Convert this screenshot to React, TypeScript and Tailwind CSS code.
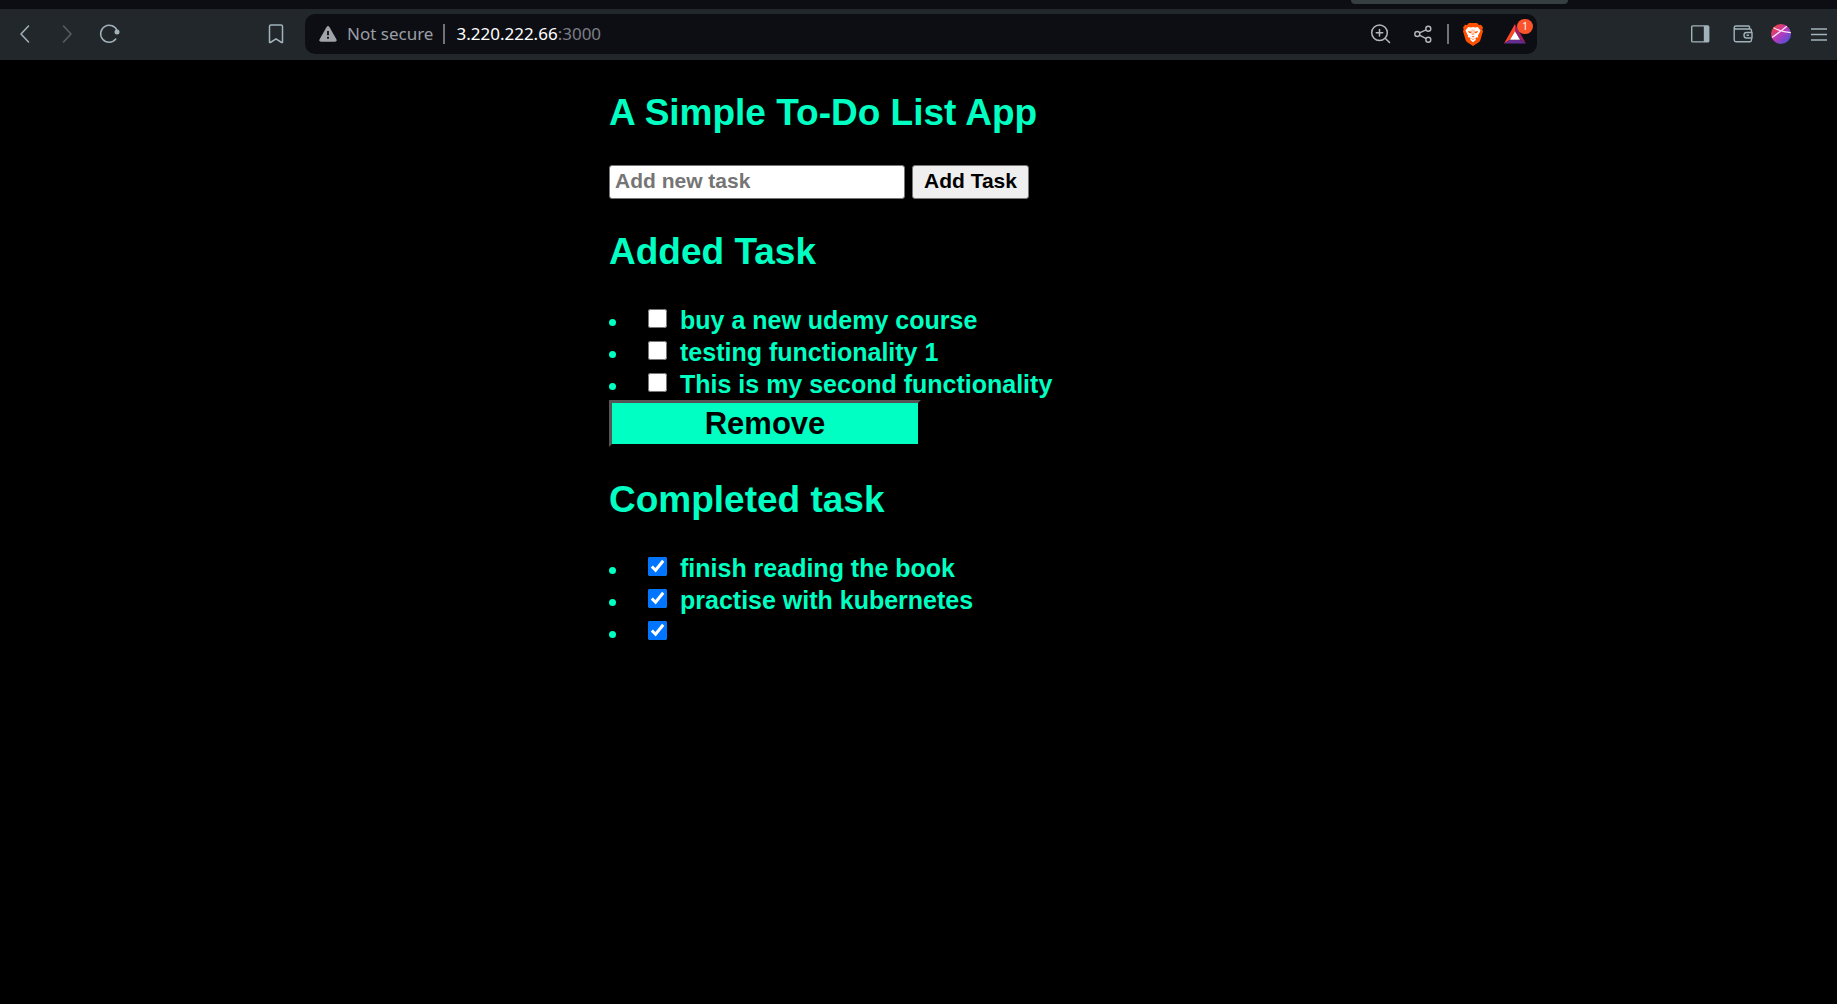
import { useState } from "react";

type Task = { id: string; text: string };

const added: Task[] = [
  { id: "a1", text: "buy a new udemy course" },
  { id: "a2", text: "testing functionality 1" },
  { id: "a3", text: "This is my second functionality" },
];

const completed: Task[] = [
  { id: "c1", text: "finish reading the book" },
  { id: "c2", text: "practise with kubernetes" },
  { id: "c3", text: "" },
];

function TaskList({ tasks, checked }: { tasks: Task[]; checked: boolean }) {
  return (
    <ul className="text-[25px] leading-8">
      {tasks.map((t) => (
        <li key={t.id} className="flex h-8 items-center">
          <span aria-hidden="true" className="mt-[5px] size-[7px] rounded-full bg-[#00ffc2]" />
          <input
            id={t.id}
            type="checkbox"
            aria-label={t.text || "Untitled task"}
            defaultChecked={checked}
            className="mr-[13px] mb-[3px] ml-8 size-[19px]"
          />
          <label htmlFor={t.id}>{t.text}</label>
        </li>
      ))}
    </ul>
  );
}

function Toolbar() {
  return (
    <header className="bg-[#0d0e14] font-['Noto_Sans',sans-serif]">
      <div className="flex h-[9px] justify-end">
        <div className="mr-[269px] h-1 w-[217px] rounded-b-lg bg-[#353f42]" />
      </div>
      <div className="flex h-[51px] items-center bg-[#22272b] pb-px text-[#a1b2ba]">
        <button aria-label="Back" className="ml-[13px] size-6">
          <svg viewBox="0 0 24 24" className="size-6" fill="none" stroke="currentColor" strokeWidth="1.5" strokeLinecap="round" strokeLinejoin="round">
            <path d="M15.5 4 L8 12 L15.5 20" />
          </svg>
        </button>
        <button aria-label="Forward" className="ml-[18px] size-6 text-[#566066]">
          <svg viewBox="0 0 24 24" className="size-6" fill="none" stroke="currentColor" strokeWidth="1.5" strokeLinecap="round" strokeLinejoin="round">
            <path d="M8.5 4 L16 12 L8.5 20" />
          </svg>
        </button>
        <button aria-label="Reload" className="ml-[19px] size-6">
          <svg viewBox="0 0 24 24" className="size-6" fill="none" stroke="currentColor" strokeWidth="1.5" strokeLinecap="round">
            <path d="M19.2 9 A8.5 8.5 0 1 0 17.8 17" />
            <circle cx="19" cy="10" r="2.5" fill="currentColor" stroke="none" />
          </svg>
        </button>
        <button aria-label="Bookmark" className="ml-[142px] size-6">
          <svg viewBox="0 0 24 24" className="size-6" fill="none" stroke="currentColor" strokeWidth="1.5" strokeLinejoin="round">
            <path d="M5.5 4.5 Q5.5 3 7 3 H17 Q18.5 3 18.5 4.5 V20.5 H17.6 L12 16.8 L6.4 20.5 H5.5 Z" />
          </svg>
        </button>
        <div className="ml-[17px] flex h-10 min-w-0 grow items-center rounded-[10px] bg-[#0d0e14] text-[17px] text-[#9a9ea5]">
          <svg viewBox="0 0 18 16" className="ml-3.5 h-4 w-[18px] shrink-0" fill="#a0a3a8">
            <path d="M7.6 1 Q9 -0.8 10.4 1 L17.4 13.2 Q18.2 15.6 16 15.7 H2 Q-0.2 15.6 0.6 13.2 Z" />
            <path d="M9 5 V9.2" stroke="#0d0e14" strokeWidth="1.8" />
            <circle cx="9" cy="11.8" r="1.1" fill="#0d0e14" />
          </svg>
          <span className="ml-2.5 whitespace-nowrap">Not secure</span>
          <span className="ml-2.5 h-5 w-0.5 shrink-0 bg-[#6f7277]" />
          <span className="ml-[11px] whitespace-nowrap text-[#7c7f85]">
            <span className="text-white">3.220.222.66</span>:3000
          </span>
          <div className="ml-auto flex items-center text-[#b4b7bb]">
            <button aria-label="Zoom" className="size-6">
              <svg viewBox="0 0 24 24" className="size-6" fill="none" stroke="currentColor" strokeWidth="1.5" strokeLinecap="round">
                <circle cx="10.5" cy="10.8" r="7.8" />
                <path d="M16.2 16.3 L20.5 20.5 M10.5 7.6 V14 M7.3 10.8 H13.7" />
              </svg>
            </button>
            <button aria-label="Share" className="ml-[18px] size-6">
              <svg viewBox="0 0 24 24" className="size-6" fill="none" stroke="currentColor" strokeWidth="1.4">
                <circle cx="6.3" cy="12" r="2.5" />
                <circle cx="17.3" cy="6.7" r="2.5" />
                <circle cx="17.3" cy="17.8" r="2.5" />
                <path d="M8.5 10.9 L15.1 7.8 M8.5 13.1 L15.1 16.7" />
              </svg>
            </button>
            <span className="ml-3 h-5 w-0.5 bg-[#6f7277]" />
            <button aria-label="Brave Shields" className="ml-3 size-6">
              <svg viewBox="0 0 24 24" className="size-6">
                <path d="M8 1 H16 L18 3 L20 2.8 L22 5.4 L21.3 7.3 L22 9.2 L19.3 18.2 Q18.9 19.4 17.8 20.2 L12 24 L6.2 20.2 Q5.1 19.4 4.7 18.2 L2 9.2 L2.7 7.3 L2 5.4 L4 2.8 L6 3 Z" fill="#ff5000" />
                <path d="M7.2 5 L10 5.5 L12 5 L14 5.5 L16.8 5 L19.5 8.4 L18.6 10.6 L17 13.6 L17.2 15.2 L14.5 15.8 L14.8 18 L12 20.2 L9.2 18 L9.5 15.8 L6.8 15.2 L7 13.6 L5.4 10.6 L4.5 8.4 Z" fill="white" />
                <path d="M7 8.9 L10.4 9.7 L10 11.3 L8 10.7 Z M17 8.9 L13.6 9.7 L14 11.3 L16 10.7 Z M10.3 14.2 H13.7 L12 15.6 Z M9.5 16.2 L12 17 L14.5 16.2 L12 17.8 Z" fill="#ff5000" />
                <path d="M11.1 7.5 L10.9 10.2 L11.4 13 M12.9 7.5 L13.1 10.2 L12.6 13" fill="none" stroke="#ff5000" strokeWidth="0.6" />
              </svg>
            </button>
            <button aria-label="Brave Rewards" className="relative mr-2.5 ml-[18px] size-6">
              <svg viewBox="0 0 24 24" className="size-6">
                <path d="M12 2 L1 21.5 L7 17.7 L12 9.3 Z" fill="#ff4724" />
                <path d="M12 2 L23 21.5 L17 17.7 L12 9.3 Z" fill="#9e1f63" />
                <path d="M1 21.5 H23 L17 17.7 H7 Z" fill="#662d91" />
                <path d="M12 9.3 L17 17.7 H7 Z" fill="white" />
              </svg>
              <span className="absolute -top-[3px] left-[14px] flex h-[15px] w-4 items-center justify-center rounded-full bg-[#fb542b] text-[10px] text-white">1</span>
            </button>
          </div>
        </div>
        <div className="mr-2 ml-[151px] flex items-center">
          <button aria-label="Sidebar" className="size-6">
            <svg viewBox="0 0 24 24" className="size-6" fill="none" stroke="currentColor" strokeWidth="1.4">
              <rect x="3.7" y="3.9" width="17" height="16" rx="1" />
              <path d="M15.8 4 H20.5 V20 H15.8 Z" fill="currentColor" stroke="none" />
            </svg>
          </button>
          <button aria-label="Wallet" className="ml-[19px] size-6">
            <svg viewBox="0 0 24 24" className="size-6" fill="none" stroke="currentColor" strokeWidth="1.4" strokeLinejoin="round">
              <path d="M20.5 10 V8.5 Q20.5 7 19 7 H5 Q3.2 7 3.2 5.5 Q3.2 4 5 4 H17.5 Q18.5 4 18.5 5 V7 M3.2 5.5 V18 Q3.2 19.7 5 19.7 H19 Q20.5 19.7 20.5 18 V16.5" />
              <path d="M21 10.5 H15.5 Q13 10.5 13 13.2 Q13 16 15.5 16 H21 Z M15.5 13.2 H18" />
            </svg>
          </button>
          <button aria-label="Profile" className="ml-4 size-5">
            <svg viewBox="0 0 20 20" className="size-5">
              <defs>
                <linearGradient id="avatar" x1="0" y1="0" x2="1" y2="1">
                  <stop offset="0.1" stopColor="#f0442f" />
                  <stop offset="0.45" stopColor="#c438b4" />
                  <stop offset="0.9" stopColor="#4b50de" />
                </linearGradient>
              </defs>
              <circle cx="10" cy="10" r="10" fill="url(#avatar)" />
              <path d="M2.5 3.8 Q9 7.5 19.8 8.7 M1 13.5 Q7 9.5 15.8 2.2" fill="none" stroke="#ffe4f2" strokeWidth="1.3" />
            </svg>
          </button>
          <button aria-label="Menu" className="ml-[18px] size-5">
            <svg viewBox="0 0 20 20" className="size-5" fill="none" stroke="currentColor" strokeWidth="1.6">
              <path d="M2 5 H18 M2 10.5 H18 M2 16 H18" />
            </svg>
          </button>
        </div>
      </div>
    </header>
  );
}

export default function App() {
  const [draft, setDraft] = useState("");
  return (
    <div className="min-h-screen bg-black">
      <Toolbar />
      <main className="mx-auto max-w-[619px] pt-8 pb-8 font-['Liberation_Sans',Arial,sans-serif] font-bold text-[#00ffc2]">
        <h1 className="mb-[31px] text-[37px] leading-[42px]">A Simple To-Do List App</h1>
        <form className="flex gap-[7px] text-[21px]" onSubmit={(e) => e.preventDefault()}>
          <input
            aria-label="Add new task"
            placeholder="Add new task"
            value={draft}
            onChange={(e) => setDraft(e.target.value)}
            className="h-[34px] w-[296px] rounded-[3px] border border-[#767676] bg-white px-[5px] pb-0.5 text-black placeholder:text-[#757575]"
          />
          <button type="submit" className="h-[34px] w-[117px] rounded-[3px] border border-[#767676] bg-[#efefef] pb-0.5 leading-7 text-black">
            Add Task
          </button>
        </form>
        <h2 className="mt-8 mb-[31px] text-[37px] leading-[42px]">Added Task</h2>
        <TaskList tasks={added} checked={false} />
        <button className="block h-[47px] w-[312px] border-3 border-t-[#555555] border-r-black border-b-black border-l-[#555555] bg-[#00ffc2] text-[31px] leading-9 text-black">
          Remove
        </button>
        <h2 className="mt-8 mb-[31px] text-[37px] leading-[42px]">Completed task</h2>
        <TaskList tasks={completed} checked />
      </main>
    </div>
  );
}
